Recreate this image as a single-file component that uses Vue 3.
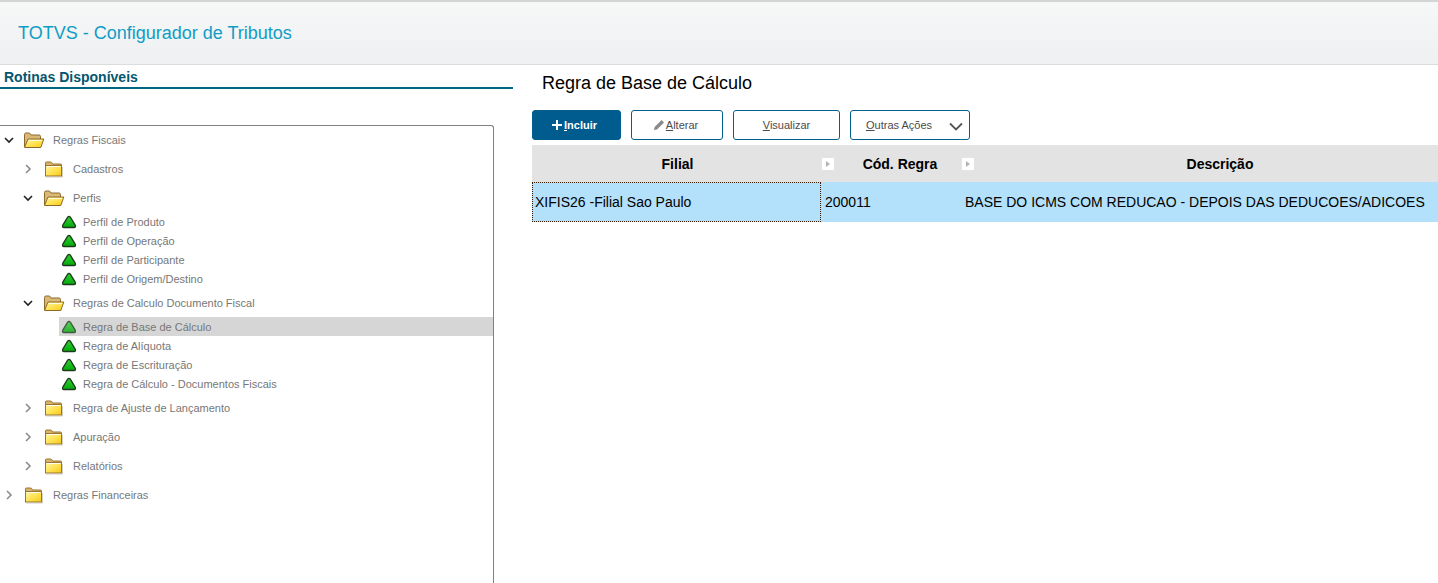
<script setup>
const tree = [
  { type: 'folder', level: 0, open: true, label: 'Regras Fiscais' },
  { type: 'folder', level: 1, open: false, label: 'Cadastros' },
  { type: 'folder', level: 1, open: true, label: 'Perfis' },
  { type: 'leaf', label: 'Perfil de Produto' },
  { type: 'leaf', label: 'Perfil de Operação' },
  { type: 'leaf', label: 'Perfil de Participante' },
  { type: 'leaf', label: 'Perfil de Origem/Destino' },
  { type: 'folder', level: 1, open: true, label: 'Regras de Calculo Documento Fiscal' },
  { type: 'leaf', label: 'Regra de Base de Cálculo', selected: true },
  { type: 'leaf', label: 'Regra de Alíquota' },
  { type: 'leaf', label: 'Regra de Escrituração' },
  { type: 'leaf', label: 'Regra de Cálculo - Documentos Fiscais' },
  { type: 'folder', level: 1, open: false, label: 'Regra de Ajuste de Lançamento' },
  { type: 'folder', level: 1, open: false, label: 'Apuração' },
  { type: 'folder', level: 1, open: false, label: 'Relatórios' },
  { type: 'folder', level: 0, open: false, label: 'Regras Financeiras' },
]

function rowClass(row) {
  if (row.type === 'leaf') return ['tree__row', 'tree__row--leaf', { 'tree__row--selected': row.selected }]
  return ['tree__row', 'tree__row--folder', 'tree__row--level' + row.level]
}
</script>

<template>
  <div class="page">
    <svg class="defs" width="0" height="0" aria-hidden="true">
      <defs>
        <linearGradient id="folderFront" x1="0" y1="0" x2="1" y2="1">
          <stop offset="0" stop-color="#fff6a8" />
          <stop offset="0.55" stop-color="#ffe14d" />
          <stop offset="1" stop-color="#f5c71a" />
        </linearGradient>
        <linearGradient id="leafGreen" x1="0" y1="0" x2="0" y2="1">
          <stop offset="0" stop-color="#2fd02f" />
          <stop offset="1" stop-color="#04a80c" />
        </linearGradient>
      </defs>
    </svg>

    <header class="topbar">
      <h1 class="topbar__title">TOTVS - Configurador de Tributos</h1>
    </header>

    <main class="main">
      <aside class="side">
        <h2 class="side__title">Rotinas Disponíveis</h2>
        <div class="tree">
          <div v-for="row in tree" :key="row.label" :class="rowClass(row)">
            <template v-if="row.type === 'folder'">
              <svg class="chevron" :class="{ 'chevron--open': row.open }" width="10" height="10" viewBox="0 0 10 10">
                <path v-if="row.open" d="M1 3l4 4 4-4" />
                <path v-else d="M3 1l4 4-4 4" />
              </svg>
              <svg v-if="row.open" class="folder" width="22" height="18" viewBox="0 0 22 18">
                <path d="M1.500 16V3.500q0-1.500 1.500-1.500h3.500l1.500 2h8q1.500 0 1.500 1.500V8" fill="#d9b878" stroke="#8d6a2c" />
                <path d="M1.500 16.500L5 8h15.800l-3 8.500z" fill="url(#folderFront)" stroke="#8d6a2c" stroke-linejoin="round" />
                <path d="M5.500 9.500h13.500" stroke="#fffbe0" fill="none" />
              </svg>
              <svg v-else class="folder" width="22" height="18" viewBox="0 0 22 18">
                <path d="M2.500 15.500V3q0-1 1-1h4q1 0 1.500 1l.5 1h8q1 0 1 1v10.500z" fill="#d9b36a" stroke="#9a7430" />
                <rect x="2.500" y="5.500" width="16" height="10.500" fill="url(#folderFront)" stroke="#9a7430" />
                <path d="M3.500 6.500h14" stroke="#fffdf0" fill="none" />
                <path d="M3 17h16.500V7" stroke="#b8b09a" fill="none" opacity="0.6" />
              </svg>
            </template>
            <svg v-else class="leaf-icon" width="16" height="14" viewBox="0 0 16 14">
              <path d="M6.700 2.200q1.300-1.700 2.600 0l4.900 8q.9 2.300-1.200 2.300H3q-2.100 0-1.200-2.300z" fill="url(#leafGreen)" stroke="#1d3a1d" stroke-width="1.300" stroke-linejoin="round" />
            </svg>
            <span class="tree__label">{{ row.label }}</span>
          </div>
        </div>
      </aside>

      <section class="content">
        <h2 class="content__title">Regra de Base de Cálculo</h2>
        <div class="actions">
          <button type="button" class="btn btn--primary btn--include">
            <svg width="12" height="12" viewBox="0 0 12 12"><path d="M6 1v10M1 6h10" stroke="#fff" stroke-width="2" /></svg>
            <span><u>I</u>ncluir</span>
          </button>
          <button type="button" class="btn btn--edit">
            <svg width="12" height="12" viewBox="0 0 12 12"><path d="M1 11l.6-3L8.600 1l2.400 2.400L4 10.400z" fill="#8a8a8a" /></svg>
            <span><u>A</u>lterar</span>
          </button>
          <button type="button" class="btn btn--view"><span><u>V</u>isualizar</span></button>
          <button type="button" class="btn btn--more">
            <span><u>O</u>utras Ações</span>
            <svg class="btn__caret" width="14" height="9" viewBox="0 0 14 9"><path d="M1 1.500l6 6 6-6" fill="none" stroke="#555" stroke-width="1.800" /></svg>
          </button>
        </div>

        <div class="grid">
          <div class="grid__head">
            <div class="grid__th grid__col1">
              <span class="grid__th-label">Filial</span>
              <span class="sort"><i></i></span>
            </div>
            <div class="grid__th grid__col2">
              <span class="grid__th-label">Cód. Regra</span>
              <span class="sort"><i></i></span>
            </div>
            <div class="grid__th grid__col3">
              <span class="grid__th-label">Descrição</span>
            </div>
          </div>
          <div class="grid__row">
            <div class="grid__td grid__col1 grid__td--focus">XIFIS26 -Filial Sao Paulo</div>
            <div class="grid__td grid__col2">200011</div>
            <div class="grid__td grid__col3">BASE DO ICMS COM REDUCAO - DEPOIS DAS DEDUCOES/ADICOES</div>
          </div>
        </div>
      </section>
    </main>
  </div>
</template>

<style scoped>
.page {
  height: 583px;
  overflow: hidden;
  font-family: "Liberation Sans", Arial, sans-serif;
  background: #fff;
  color: #000;
}

.defs {
  display: block;
  height: 0;
}

.topbar {
  height: 65px;
  box-sizing: border-box;
  display: flex;
  align-items: center;
  border-top: 2px solid #d2d4d6;
  border-bottom: 1px solid #dcdcdc;
  background: linear-gradient(#f6f7f7, #eff0f2);
  padding: 0 0 0 18px;
}

.topbar__title {
  margin: 0;
  font-size: 18px;
  font-weight: 400;
  color: #0f9dc6;
}

.main {
  display: flex;
}

.side {
  width: 513px;
  flex: none;
}

.side__title {
  margin: 0;
  height: 24px;
  box-sizing: border-box;
  padding: 4px 0 0 4px;
  font-size: 14px;
  line-height: 16px;
  font-weight: 700;
  color: #04566f;
  border-bottom: 2px solid #00667f;
}

.tree {
  margin-top: 36px;
  width: 494px;
  height: 460px;
  box-sizing: border-box;
  border-top: 1px solid #808080;
  border-right: 1px solid #808080;
  border-top-right-radius: 3px;
  font-size: 11px;
  color: #777;
}

.tree__row {
  display: flex;
  align-items: center;
}

.tree__row--folder {
  height: 29px;
}

.tree__row--folder:first-child {
  height: 27px;
  margin-bottom: 1px;
}

.tree__row--level0 {
  padding-left: 4px;
}

.tree__row--level1 {
  padding-left: 23px;
}

.tree__row--level1 .chevron {
  margin-right: 10px;
}

.tree__row--leaf {
  height: 19px;
  margin-left: 59px;
  padding-left: 2px;
}

.tree__row--selected {
  background: #d6d6d6;
}

.tree__row--selected .leaf-icon {
  opacity: 0.8;
}

.chevron {
  flex: none;
  margin-right: 9px;
}

.chevron path {
  fill: none;
  stroke: #8c8c8c;
  stroke-width: 1.6;
}

.chevron--open path {
  stroke: #222;
}

.folder {
  flex: none;
  margin-right: 8px;
}

.leaf-icon {
  flex: none;
  margin-right: 6px;
}

.content {
  flex: 1;
  min-width: 0;
  margin-left: 19px;
}

.content__title {
  margin: 0;
  height: 45px;
  padding: 8px 0 0 10px;
  box-sizing: border-box;
  font-size: 18px;
  line-height: 21px;
  font-weight: 400;
}

.actions {
  display: flex;
  gap: 10px;
  height: 30px;
  margin-bottom: 5px;
}

.btn {
  display: flex;
  align-items: center;
  justify-content: center;
  gap: 2px;
  height: 30px;
  box-sizing: border-box;
  padding: 0;
  border: 1px solid #005f8c;
  border-radius: 3px;
  background: #fff;
  color: #4b4b4b;
  font-family: inherit;
  font-size: 11px;
  font-weight: 400;
}

.btn--primary {
  background: #005c8f;
  color: #fff;
  font-weight: 700;
}

.btn--include {
  width: 89px;
  gap: 1px;
  padding-right: 5px;
}

.btn--edit {
  width: 92px;
  gap: 1px;
  padding-right: 3px;
}

.btn--view {
  width: 107px;
}

.btn--more {
  width: 120px;
  justify-content: space-between;
  padding: 0 6px 0 15px;
}

.btn__caret {
  margin-top: 3px;
}

.grid {
  font-size: 14px;
}

.grid__head,
.grid__row {
  display: flex;
}

.grid__col1 {
  width: 289px;
}

.grid__col2 {
  width: 140px;
}

.grid__col3 {
  flex: 1;
  min-width: 0;
}

.grid__head {
  height: 37px;
  background: #e3e3e3;
}

.grid__th {
  position: relative;
  display: flex;
  align-items: center;
  justify-content: center;
  box-sizing: border-box;
  font-weight: 700;
}

.grid__th.grid__col1 {
  padding-left: 2px;
}

.grid__th.grid__col2 {
  padding-left: 18px;
}

.grid__th.grid__col3 {
  padding-left: 41px;
}

.sort {
  position: absolute;
  right: -13px;
  top: 13px;
  width: 12px;
  height: 12px;
  background: #fff;
  display: flex;
  align-items: center;
  justify-content: center;
}

.sort i {
  border-left: 4px solid #b4b4b4;
  border-top: 3px solid transparent;
  border-bottom: 3px solid transparent;
}

.grid__row {
  height: 40px;
  background: #b3e0fb;
}

.grid__td {
  display: flex;
  align-items: center;
  box-sizing: border-box;
  padding-left: 4px;
  white-space: nowrap;
}

.grid__td--focus {
  border: 1px dotted #3a1c00;
  padding-left: 2px;
}
</style>
